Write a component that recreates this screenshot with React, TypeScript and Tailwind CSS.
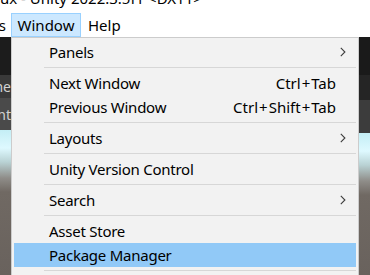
import React from "react";

function Chevron() {
  return (
    <svg width="6" height="10" viewBox="0 0 6 10" className="block">
      <path d="M0.8 0.9 L4.9 5 L0.8 9.1" fill="none" stroke="#3c3c3c" strokeWidth="1.1" />
    </svg>
  );
}

type ItemProps = { label: string; shortcut?: string[]; sub?: boolean; active?: boolean };

function Shortcut({ keys }: { keys: string[] }) {
  return (
    <span className="ml-auto flex tracking-normal">
      {keys.map((k, i) => (
        <React.Fragment key={k}>
          {i > 0 ? <span className="px-[1px]">+</span> : null}
          <span>{k}</span>
        </React.Fragment>
      ))}
    </span>
  );
}

function Item({ label, shortcut, sub, active }: ItemProps) {
  return (
    <div
      className={`flex h-[24px] items-center pl-[35px] pr-[10px] whitespace-nowrap text-black ${
        active ? "bg-[#91c9f7]" : ""
      }`}
    >
      <span>{label}</span>
      {shortcut ? <Shortcut keys={shortcut} /> : <span className="ml-auto" />}
      <span className="flex w-[10px] justify-end">{sub ? <Chevron /> : null}</span>
    </div>
  );
}

function Sep() {
  return (
    <div className="flex h-[7px] items-center pl-[30px]">
      <div className="h-px w-full bg-[#d7d7d7]" />
    </div>
  );
}

export default function App() {
  return (
    <div className="relative h-[275px] w-[370px] overflow-hidden bg-white font-['Noto_Sans',sans-serif] text-[15px]">
      {/* title bar (clipped) */}
      <div className="h-[13px] overflow-hidden bg-white">
        <div className="mt-[-9px] whitespace-nowrap leading-[15px] text-black">ux - Unity 2022.3.5f1 &lt;DX11&gt;</div>
      </div>

      {/* menu bar */}
      <div className="flex h-[24px] bg-white text-black">
        <div className="flex w-[11px] items-center justify-end overflow-hidden pr-[5px] whitespace-nowrap">
          <span>Tools</span>
        </div>
        <div className="flex h-[24px] w-[70px] items-center justify-center border border-[#99d1ff] bg-[#cce8ff]">
          Window
        </div>
        <div className="flex items-center px-[7px]">Help</div>
      </div>

      {/* editor background */}
      <div className="flex h-[238px]">
        <div className="flex w-[11px] flex-col overflow-hidden text-[14px] text-[#d2d2d2]">
          <div className="h-[38px] bg-[#1c1c1c]" />
          <div className="flex h-[23px] items-center justify-end bg-[#393939] whitespace-nowrap">
            <span>he</span>
          </div>
          <div className="flex h-[32px] items-center justify-end bg-[#4a4a4a] whitespace-nowrap">
            <span>nt</span>
          </div>
          <div className="flex-1 bg-[linear-gradient(to_bottom,#c4eef5_0px,#def9ff_18px,#b9d2d4_32px,#8f8d89_48px,#706963_62px,#69625d_100%)]" />
        </div>
        <div className="flex flex-1 flex-col">
          <div className="h-[38px] bg-[#1a1a1a]" />
          <div className="h-[25px] bg-[#252525]" />
          <div className="h-[33px] bg-[#3c3c3c]" />
          <div className="flex-1 bg-[linear-gradient(to_bottom,#c4eef5_0px,#def9ff_18px,#b9d2d4_32px,#8f8d89_48px,#706963_62px,#69625d_100%)]" />
        </div>
      </div>

      {/* dropdown menu */}
      <div className="absolute left-[11px] top-[37px] w-[348px] border border-[#cccccc] bg-[#f2f2f2] p-[2px] tracking-[-0.25px]">
        <Item label="Panels" sub />
        <Sep />
        <Item label="Next Window" shortcut={["Ctrl", "Tab"]} />
        <Item label="Previous Window" shortcut={["Ctrl", "Shift", "Tab"]} />
        <Sep />
        <Item label="Layouts" sub />
        <Sep />
        <Item label="Unity Version Control" />
        <Sep />
        <Item label="Search" sub />
        <Sep />
        <Item label="Asset Store" />
        <Item label="Package Manager" active />
        <Sep />
        <Item label="Asset Management" sub />
        <Item label="Text" sub />
      </div>
    </div>
  );
}
